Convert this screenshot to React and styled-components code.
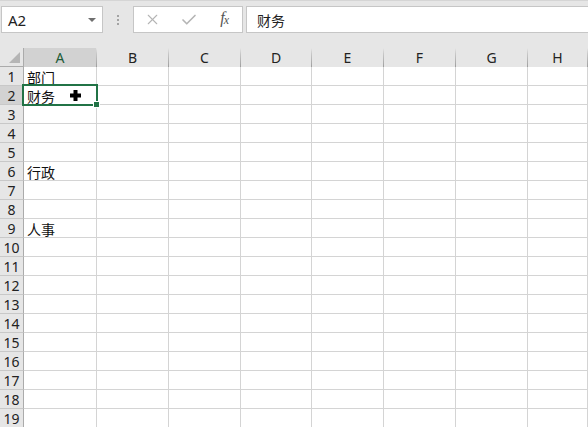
import React from 'react';
import styled, {createGlobalStyle} from 'styled-components';
import {X, Check} from 'lucide-react';

const GlobalStyle = createGlobalStyle`
    html, body {
        margin: 0;
        padding: 0;
        background: #ffffff;
    }
    body {
        width: 588px;
        height: 427px;
        overflow: hidden;
        font-family: "Noto Sans", "Open Sans", sans-serif;
    }
`

const columns = ['A', 'B', 'C', 'D', 'E', 'F', 'G', 'H']
const data = {1: '部门', 2: '财务', 6: '行政', 9: '人事'}
const rows = Array.from({length: 19}, (_, i) => i + 1)

const FormulaBar = styled.div`
    display: flex;
    align-items: center;
    height: 48px;
    box-sizing: border-box;
    padding: 0 0 10px 1px;
    border-top: 1px solid #d5d5d5;
    background: #e6e6e6;
`

const Box = styled.div`
    display: flex;
    align-items: center;
    height: 27px;
    box-sizing: border-box;
    background: #ffffff;
    border: 1px solid #c6c6c6;
`

const NameBox = styled(Box)`
    width: 102px;
    padding: 0 6px 0 6px;
    justify-content: space-between;
    font-size: 15px;
    color: #222;

    .arrow {
        width: 0;
        height: 0;
        border-left: 4px solid transparent;
        border-right: 4px solid transparent;
        border-top: 4px solid #6f6f6f;
    }
`

const Grip = styled.div`
    display: flex;
    flex-direction: column;
    gap: 2px;
    margin: 0 14px 0 14px;

    span {
        width: 2px;
        height: 2px;
        background: #a3a3a3;
    }
`

const ButtonsBox = styled(Box)`
    width: 110px;
    padding: 0 0 0 1px;
`

const BarButton = styled.div`
    width: 36px;
    display: flex;
    align-items: center;
    justify-content: center;
    color: #b5b5b5;
`

const Fx = styled.div`
    width: 36px;
    text-align: center;
    font-family: "Liberation Serif", serif;
    font-style: italic;
    font-size: 16px;
    color: #555;
    letter-spacing: -1px;
    padding-bottom: 2px;

    sub {
        font-size: 12px;
        vertical-align: -1px;
    }
`

const FormulaInput = styled(Box)`
    flex: 1;
    margin-left: 3px;
    border-right: none;
    padding-left: 10px;
    font-family: "Noto Sans CJK SC", sans-serif;
    font-size: 14px;
    color: #222;
`

const Sheet = styled.div`
    display: grid;
    grid-template-columns: 24px 73px 72px 72px 71px 72px 72px 72px 1fr;
    grid-auto-rows: 19px;
`

const Corner = styled.div`
    position: relative;
    background: #e6e6e6;
    border-right: 1px solid #ababab;
    border-bottom: 1px solid #ababab;
    box-sizing: border-box;

    &::after {
        content: '';
        position: absolute;
        right: 3px;
        bottom: 3px;
        width: 0;
        height: 0;
        border-left: 11px solid transparent;
        border-bottom: 11px solid #b5b5b5;
    }
`

const ColHeader = styled.div`
    display: flex;
    align-items: center;
    justify-content: center;
    box-sizing: border-box;
    font-size: 14px;
    color: ${p => p.$active ? '#1e5c38' : '#222'};
    background: ${p => p.$active ? '#d2d2d2' : '#e6e6e6'};
    border-bottom: ${p => p.$active ? '2px solid #217346' : '1px solid #ababab'};
    border-right: 1px solid;
    border-image: linear-gradient(to bottom, #e6e6e6 0%, #c8c8c8 30%, #9e9e9e 100%) 1;
    border-image-slice: 0 1 0 0;
    border-image-width: 0 1px 0 0;
    padding-top: 1px;
`

const RowHeader = styled.div`
    display: flex;
    align-items: center;
    justify-content: center;
    box-sizing: border-box;
    font-size: 14px;
    color: #222;
    background: ${p => p.$active ? '#d2d2d2' : '#e6e6e6'};
    border-right: 1px solid #ababab;
    border-bottom: 1px solid #c8c8c8;
    padding-top: 1px;
`

const Cell = styled.div`
    position: relative;
    box-sizing: border-box;
    border-right: 1px solid #d4d4d4;
    border-bottom: 1px solid #d4d4d4;
    padding: 1px 0 0 3px;
    font-family: "Noto Sans CJK SC", sans-serif;
    font-size: 14px;
    line-height: 18px;
    color: #111;
    white-space: nowrap;
`

const Selection = styled.div`
    position: absolute;
    left: -2px;
    top: -2px;
    width: 76px;
    height: 22px;
    box-sizing: border-box;
    border: 2px solid #217346;
    pointer-events: none;
    z-index: 2;

    &::after {
        content: '';
        position: absolute;
        right: -4px;
        bottom: -4px;
        width: 5px;
        height: 5px;
        background: #217346;
        border: 1px solid #ffffff;
    }
`

const Cursor = styled.svg`
    position: absolute;
    left: 46px;
    top: 4px;
    z-index: 3;
`

const App = () => {
    return(
        <>
            <GlobalStyle/>
            <FormulaBar>
                <NameBox>
                    A2
                    <span className="arrow"/>
                </NameBox>
                <Grip><span/><span/><span/></Grip>
                <ButtonsBox>
                    <BarButton><X size={17} strokeWidth={1.5}/></BarButton>
                    <BarButton><Check size={18} strokeWidth={2.2}/></BarButton>
                    <Fx>f<sub>x</sub></Fx>
                </ButtonsBox>
                <FormulaInput>财务</FormulaInput>
            </FormulaBar>
            <Sheet>
                <Corner/>
                {columns.map(c => (
                    <ColHeader key={c} $active={c === 'A'}>{c}</ColHeader>
                ))}
                {rows.map(r => (
                    <React.Fragment key={r}>
                        <RowHeader $active={r === 2}>{r}</RowHeader>
                        {columns.map(c => (
                            <Cell key={c}>
                                {c === 'A' && data[r]}
                                {c === 'A' && r === 2 && (
                                    <>
                                        <Selection/>
                                        <Cursor width="11" height="11" viewBox="0 0 11 11">
                                            <path d="M3.5 0h4v3.5H11v4H7.5V11h-4V7.5H0v-4h3.5z" fill="#000"/>
                                        </Cursor>
                                    </>
                                )}
                            </Cell>
                        ))}
                    </React.Fragment>
                ))}
            </Sheet>
        </>
    )
}

export default App
